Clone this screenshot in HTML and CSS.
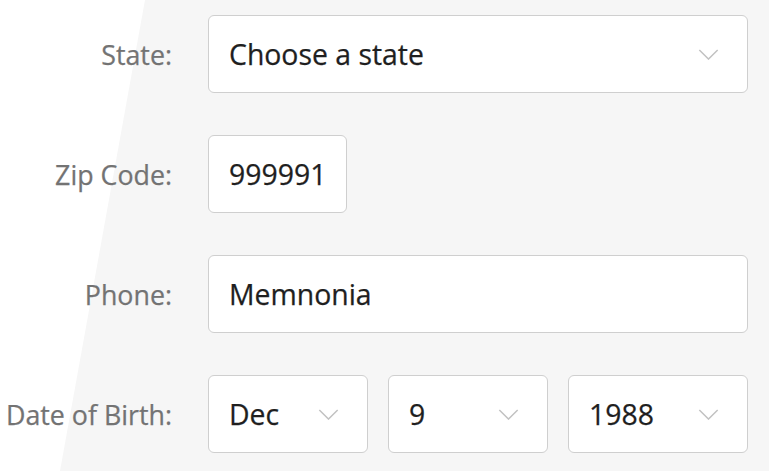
FILE: index.html
```html
<!DOCTYPE html>
<html>
<head>
<meta charset="utf-8">
<link rel="stylesheet" href="styles.css">
</head>
<body>
<div class="panel-bg"></div>
<form class="form">
  <div class="row">
    <label class="label">State:</label>
    <div class="fields">
      <div class="box select full"><span class="value">Choose a state</span><svg class="chev" viewBox="0 0 22 12"><path d="M1 1 L11 11 L21 1"/></svg></div>
    </div>
  </div>
  <div class="row">
    <label class="label">Zip Code:</label>
    <div class="fields">
      <div class="box zip"><span class="value">999991</span></div>
    </div>
  </div>
  <div class="row">
    <label class="label">Phone:</label>
    <div class="fields">
      <div class="box full"><span class="value">Memnonia</span></div>
    </div>
  </div>
  <div class="row">
    <label class="label">Date of Birth:</label>
    <div class="fields dob">
      <div class="box select month"><span class="value">Dec</span><svg class="chev" viewBox="0 0 22 12"><path d="M1 1 L11 11 L21 1"/></svg></div>
      <div class="box select day"><span class="value">9</span><svg class="chev" viewBox="0 0 22 12"><path d="M1 1 L11 11 L21 1"/></svg></div>
      <div class="box select year"><span class="value">1988</span><svg class="chev" viewBox="0 0 22 12"><path d="M1 1 L11 11 L21 1"/></svg></div>
    </div>
  </div>
</form>
</body>
</html>
```

FILE: styles.css
```css
html, body {
  margin: 0;
  padding: 0;
  background: #ffffff;
  font-family: "Open Sans", "Noto Sans", sans-serif;
  overflow: hidden;
}
body {
  position: relative;
  width: 769px;
  height: 471px;
}
.panel-bg {
  position: absolute;
  inset: 0;
  background: #f6f6f6;
  clip-path: polygon(145px 0, 100% 0, 100% 100%, 60px 100%);
  z-index: 0;
}
.form {
  position: relative;
  z-index: 1;
  display: flex;
  flex-direction: column;
  gap: 42px;
  padding-top: 15px;
}
.row {
  display: grid;
  grid-template-columns: 172px 1fr;
  column-gap: 36px;
  align-items: center;
}
.label {
  text-align: right;
  font-size: 26.8px;
  color: #737373;
  white-space: nowrap;
  -webkit-text-stroke: 0.25px #737373;
}
.fields {
  display: flex;
  gap: 20px;
}
.box {
  box-sizing: border-box;
  height: 78px;
  background: #fff;
  border: 1.5px solid #cfcfcf;
  border-radius: 6px;
  display: flex;
  align-items: center;
  justify-content: space-between;
  padding: 0 28px 0 20px;
}
.value {
  font-size: 28.4px;
  color: #1f1f1f;
  -webkit-text-stroke: 0.25px #1f1f1f;
}
.full { width: 540px; }
.zip { width: 139px; }
.month { width: 160px; }
.day { width: 160px; }
.year { width: 180px; }
.chev {
  width: 21px;
  height: 11px;
  fill: none;
  stroke: #c2c2c2;
  stroke-width: 1.6;
}
```
